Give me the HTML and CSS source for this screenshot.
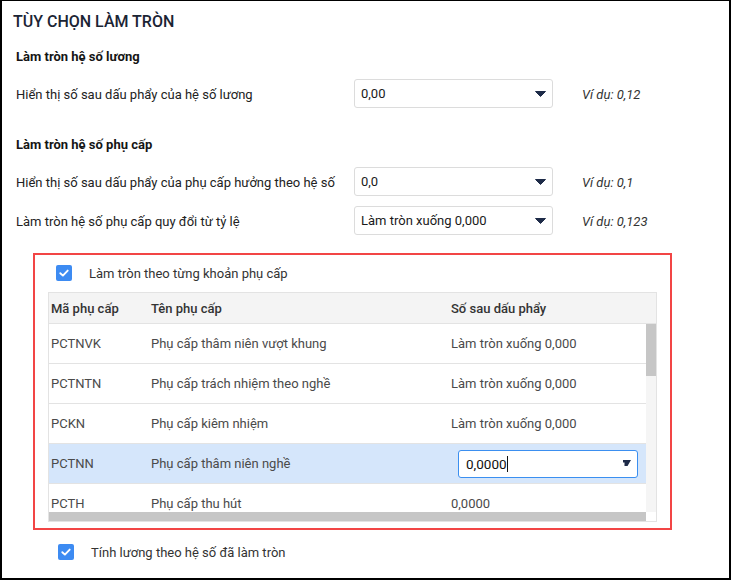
FILE: index.html
```html
<!DOCTYPE html>
<html lang="vi">
<head>
<meta charset="utf-8">
<title>Tùy chọn làm tròn</title>
<link rel="stylesheet" href="styles.css">
</head>
<body>
<div class="panel">
  <div class="title">TÙY CHỌN LÀM TRÒN</div>
  <div class="content">
    <div class="group-head first">Làm tròn hệ số lương</div>
    <div class="row r1">
      <div class="label">Hiển thị số sau dấu phẩy của hệ số lương</div>
      <div class="select"><span>0,00</span><svg class="arrow" width="11" height="6" viewBox="0 0 11 6"><path d="M0.5 0.5 H10.5 L5.5 5.5 Z" fill="#1e2b48" stroke="#1e2b48" stroke-linejoin="round"/></svg></div>
      <div class="example">Ví dụ: 0,12</div>
    </div>
    <div class="group-head second">Làm tròn hệ số phụ cấp</div>
    <div class="row r2">
      <div class="label">Hiển thị số sau dấu phẩy của phụ cấp hưởng theo hệ số</div>
      <div class="select"><span>0,0</span><svg class="arrow" width="11" height="6" viewBox="0 0 11 6"><path d="M0.5 0.5 H10.5 L5.5 5.5 Z" fill="#1e2b48" stroke="#1e2b48" stroke-linejoin="round"/></svg></div>
      <div class="example">Ví dụ: 0,1</div>
    </div>
    <div class="row r3">
      <div class="label">Làm tròn hệ số phụ cấp quy đổi từ tỷ lệ</div>
      <div class="select"><span>Làm tròn xuống 0,000</span><svg class="arrow" width="11" height="6" viewBox="0 0 11 6"><path d="M0.5 0.5 H10.5 L5.5 5.5 Z" fill="#1e2b48" stroke="#1e2b48" stroke-linejoin="round"/></svg></div>
      <div class="example">Ví dụ: 0,123</div>
    </div>

    <div class="highlight">
      <div class="check-row">
        <span class="checkbox"><svg width="16" height="16" viewBox="0 0 16 16"><path d="M4.3 8.2 L6.9 10.6 L11.7 5.6" fill="none" stroke="#fff" stroke-width="1.9" stroke-linecap="round" stroke-linejoin="round"/></svg></span>
        <span class="check-label">Làm tròn theo từng khoản phụ cấp</span>
      </div>
      <div class="grid">
        <div class="grid-head">
          <div class="c c1">Mã phụ cấp</div>
          <div class="c c2">Tên phụ cấp</div>
          <div class="c c3">Số sau dấu phẩy</div>
        </div>
        <div class="grid-body">
          <div class="viewport">
            <div class="rows">
              <div class="grow">
                <div class="c c1">PCTNVK</div>
                <div class="c c2">Phụ cấp thâm niên vượt khung</div>
                <div class="c c3">Làm tròn xuống 0,000</div>
              </div>
              <div class="grow">
                <div class="c c1">PCTNTN</div>
                <div class="c c2">Phụ cấp trách nhiệm theo nghề</div>
                <div class="c c3">Làm tròn xuống 0,000</div>
              </div>
              <div class="grow">
                <div class="c c1">PCKN</div>
                <div class="c c2">Phụ cấp kiêm nhiệm</div>
                <div class="c c3">Làm tròn xuống 0,000</div>
              </div>
              <div class="grow selected">
                <div class="c c1">PCTNN</div>
                <div class="c c2">Phụ cấp thâm niên nghề</div>
                <div class="c c3">
                  <div class="cell-select"><span class="val">0,0000</span><span class="caret"></span><svg class="mini-arrow" width="8" height="7" viewBox="0 0 8 7"><path d="M0 0 H8 L4.5 6 H1.5 V2.5 H0 Z" fill="#1e2b48"/></svg></div>
                </div>
              </div>
              <div class="grow">
                <div class="c c1">PCTH</div>
                <div class="c c2">Phụ cấp thu hút</div>
                <div class="c c3">0,0000</div>
              </div>
            </div>
            <div class="vscroll"><div class="vthumb"></div></div>
          </div>
          <div class="hscroll"><div class="hthumb"></div><div class="corner"></div></div>
        </div>
      </div>
    </div>

    <div class="check-row bottom">
      <span class="checkbox"><svg width="16" height="16" viewBox="0 0 16 16"><path d="M4.3 8.2 L6.9 10.6 L11.7 5.6" fill="none" stroke="#fff" stroke-width="1.9" stroke-linecap="round" stroke-linejoin="round"/></svg></span>
      <span class="check-label">Tính lương theo hệ số đã làm tròn</span>
    </div>
  </div>
</div>
</body>
</html>
```

FILE: styles.css
```css
* { box-sizing: border-box; }
html, body { margin: 0; padding: 0; background: #fff; }
body {
  font-family: Roboto, "Noto Sans", "Liberation Sans", sans-serif;
  font-size: 13px;
  color: #222;
}
.panel {
  width: 731px;
  height: 580px;
  border: 2px solid #000;
  border-top-width: 1px;
  overflow: hidden;
}
.title {
  margin-top: 11px;
  padding-left: 11px;
  height: 20px;
  line-height: 20px;
  font-size: 16px;
  font-weight: 500;
  color: #1b2434;
}
.content { padding-left: 14px; }
.group-head {
  height: 20px;
  line-height: 20px;
  font-weight: 700;
  color: #151515;
}
.group-head.first { margin-top: 15px; }
.group-head.second { margin-top: 27px; }
.row {
  display: flex;
  align-items: center;
  height: 29px;
}
.r1 { margin-top: 12px; }
.r2 { margin-top: 12px; }
.r3 { margin-top: 10px; }
.label { width: 338px; color: #222; padding-top: 1px; }
.select {
  width: 199px;
  height: 29px;
  border: 1px solid #dcdcdc;
  border-radius: 3px;
  display: flex;
  align-items: center;
  justify-content: space-between;
  padding: 0 6px 0 6px;
  color: #1a1a1a;
}
.example {
  margin-left: 29px;
  font-style: italic;
  color: #333;
  padding-top: 1px;
}
.highlight {
  margin-top: 18px;
  margin-left: 17px;
  width: 639px;
  height: 277px;
  border: 2px solid #f24545;
  padding: 10px 13px 0 13px;
}
.check-row {
  display: flex;
  align-items: center;
  height: 16px;
}
.highlight .check-row { margin-left: 8px; }
.checkbox {
  width: 16px;
  height: 16px;
  border-radius: 2px;
  background: #3d8bf2;
  display: block;
}
.checkbox svg { display: block; }
.check-label {
  margin-left: 17px;
  color: #333;
}
.check-row.bottom { margin-top: 14px; margin-left: 42px; }
.grid {
  margin-top: 11px;
  width: 609px;
  height: 230px;
  border: 1px solid #e3e3e3;
}
.grid-head {
  display: flex;
  height: 31px;
  background: #f4f4f4;
  border-bottom: 1px solid #e3e3e3;
  align-items: center;
  font-weight: 500;
  color: #333;
}
.c { padding-left: 2px; white-space: nowrap; }
.c1 { width: 100px; }
.c2 { width: 300px; }
.c3 { width: 197px; }
.grid-body { height: 197px; }
.viewport {
  display: flex;
  height: 188px;
  overflow: hidden;
}
.rows { width: 597px; }
.grow {
  display: flex;
  align-items: center;
  height: 40px;
  border-bottom: 1px solid #e3e3e3;
  color: #4a4a4a;
}
.grow.selected { background: #d5e6fb; }
.vscroll {
  width: 10px;
  height: 188px;
  background: #f5f5f5;
}
.vthumb {
  height: 52px;
  background: #c6c6c6;
}
.hscroll {
  display: flex;
  height: 9px;
}
.hthumb { width: 597px; background: #c6c6c6; }
.corner { width: 10px; background: #fff; }
.cell-select {
  margin-left: 7px;
  width: 180px;
  height: 28px;
  border: 1px solid #3b8ff0;
  border-radius: 3px;
  background: #fff;
  display: flex;
  align-items: center;
  padding-left: 7px;
  position: relative;
  color: #111;
  font-size: 13.5px;
}
.caret {
  width: 1px;
  height: 16px;
  background: #111;
}
.mini-arrow {
  position: absolute;
  right: 6px;
  top: 9px;
}
```
